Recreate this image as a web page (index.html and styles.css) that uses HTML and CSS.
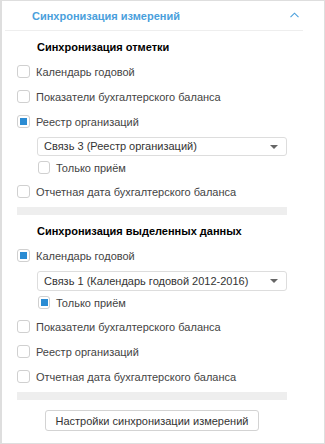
FILE: index.html
```html
<!DOCTYPE html>
<html lang="ru">
<head>
    <meta charset="UTF-8">
    <meta name="viewport" content="width=device-width, initial-scale=1.0">
    <title>Синхронизация измерений</title>
    <link rel="stylesheet" href="styles.css">
</head>
<body>
    <div class="panel">
        <div class="panel-head">
            <span class="panel-title">Синхронизация измерений</span>
            <svg class="chevron" width="9" height="6" viewBox="0 0 9 6">
                <path d="M0.5 5.2 L4.5 1.2 L8.5 5.2" fill="none" stroke="#4a9fdc" stroke-width="1.1"/>
            </svg>
        </div>

        <div class="panel-body">
            <div class="section-title">Синхронизация отметки</div>
            <label class="row"><span class="check"></span>Календарь годовой</label>
            <label class="row"><span class="check"></span>Показатели бухгалтерского баланса</label>
            <label class="row"><span class="check checked"></span>Реестр организаций</label>
            <div class="sub">
                <div class="select">Связь 3 (Реестр организаций)<span class="caret"></span></div>
                <label class="row small"><span class="check"></span>Только приём</label>
            </div>
            <label class="row"><span class="check"></span>Отчетная дата бухгалтерского баланса</label>
            <div class="separator"></div>

            <div class="section-title second">Синхронизация выделенных данных</div>
            <label class="row"><span class="check checked"></span>Календарь годовой</label>
            <div class="sub">
                <div class="select tall">Связь 1 (Календарь годовой 2012-2016)<span class="caret"></span></div>
                <label class="row small"><span class="check checked"></span>Только приём</label>
            </div>
            <label class="row"><span class="check"></span>Показатели бухгалтерского баланса</label>
            <label class="row"><span class="check"></span>Реестр организаций</label>
            <label class="row"><span class="check"></span>Отчетная дата бухгалтерского баланса</label>
            <div class="separator"></div>

            <div class="actions">
                <button class="btn">Настройки синхронизации измерений</button>
            </div>
        </div>
    </div>
</body>
</html>
```

FILE: styles.css
```css
* {
    box-sizing: border-box;
}
body {
    margin: 0;
    background-color: white;
    font-family: "Liberation Sans", Arial, sans-serif;
    font-size: 11px;
    color: #444;
}
.panel {
    width: 325px;
    height: 444px;
    border: 1px solid #dedede;
    border-left-width: 2px;
}
.panel-head {
    display: flex;
    align-items: center;
    justify-content: space-between;
    height: 30px;
    margin: 0 21px 0 3px;
    padding: 0 4px 0 27px;
    border-bottom: 1px solid #eeeeee;
}
.panel-title {
    color: #4a9fdc;
    font-weight: bold;
    font-size: 11px;
}
.chevron {
    display: block;
    margin-top: -1px;
}
.panel-body {
    width: 270px;
    margin-left: 15px;
}
.section-title {
    margin: 8px 0 3px 20px;
    line-height: 17px;
    font-weight: bold;
    color: #000;
}
.section-title.second {
    margin-top: 8px;
}
.row {
    display: flex;
    align-items: center;
    height: 25px;
}
.check {
    width: 13px;
    height: 13px;
    margin-right: 6px;
    border: 1px solid #d0d0d0;
    border-radius: 3px;
    display: flex;
    align-items: center;
    justify-content: center;
}
.check.checked::after {
    content: "";
    width: 7px;
    height: 7px;
    background-color: #2b8cd3;
}
.sub {
    padding-left: 20px;
    margin-top: 3px;
}
.select {
    position: relative;
    height: 19px;
    line-height: 17px;
    padding-left: 6px;
    border: 1px solid #dddddd;
    border-radius: 3px;
    color: #333;
}
.select.tall {
    height: 20px;
    line-height: 18px;
}
.caret {
    position: absolute;
    right: 8px;
    top: 7px;
    border-left: 4px solid transparent;
    border-right: 4px solid transparent;
    border-top: 4px solid #666;
}
.row.small {
    height: 23px;
    padding-left: 1px;
}
.row.small .check {
    width: 12px;
    margin-right: 6px;
}
.separator {
    height: 8px;
    margin-top: 3px;
    background-color: #eeeeee;
}
.actions {
    display: flex;
    justify-content: center;
    margin-top: 10px;
}
.btn {
    height: 21px;
    width: 214px;
    padding: 0;
    background-color: white;
    border: 1px solid #d3d3d3;
    border-radius: 3px;
    font-family: "Liberation Sans", Arial, sans-serif;
    font-size: 11px;
    color: #333;
}
```
